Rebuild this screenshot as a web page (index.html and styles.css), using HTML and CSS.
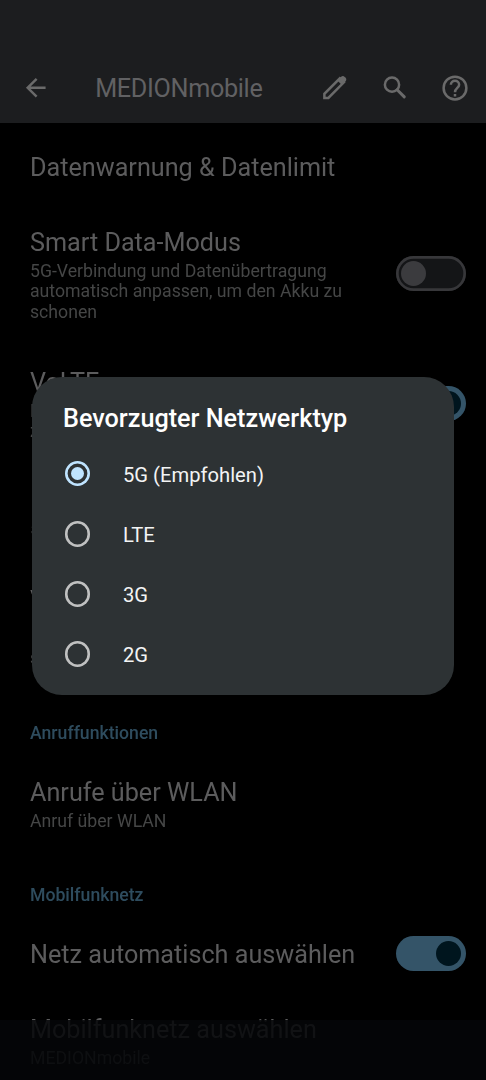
FILE: index.html
```html
<!DOCTYPE html>
<html lang="de">
<head>
<meta charset="utf-8">
<title>MEDIONmobile</title>
<link rel="stylesheet" href="styles.css">
</head>
<body>
<div class="screen">
  <header class="bar">
    <svg class="back" width="29.500" height="29.500" viewBox="0 0 24 24"><path d="M20 11H7.830l5.590-5.590L12 4l-8 8 8 8 1.410-1.410L7.830 13H20v-2z"/></svg>
    <h1 class="bar-title">MEDIONmobile</h1>
    <div class="actions">
      <svg width="30" height="30" viewBox="0 0 24 24"><path class="line" d="M3.500 20v-3.300L15.900 4.300l3.200 3.200L6.700 20z"/><path d="M13.900 5.900l2.800-2.800a2.200 2.200 0 0 1 3.100 0l.5.5a2.200 2.200 0 0 1 0 3.100l-2.800 2.800z"/></svg>
      <svg width="30" height="30" viewBox="0 0 24 24"><circle class="line" cx="9.600" cy="9.300" r="5.700"/><path class="line handle" d="M13.700 13.400l5.700 5.700"/></svg>
      <svg width="30" height="30" viewBox="0 0 24 24"><path d="M11 16.800h2v2h-2zM12 1.900a10.100 10.100 0 1 0 0 20.200 10.100 10.100 0 0 0 0-20.200zm0 18.200a8.100 8.100 0 1 1 0-16.200 8.100 8.100 0 0 1 0 16.200z"/><path class="line" d="M8.700 9.300c0-1.800 1.500-3.100 3.300-3.100s3.300 1.300 3.300 3.100c0 2.500-3.300 2.700-3.300 6"/></svg>
    </div>
  </header>
  <main class="list">
    <section class="row limit"><h2>Datenwarnung &amp; Datenlimit</h2></section>
    <section class="row smart">
      <div class="copy"><h2>Smart Data-Modus</h2><p>5G-Verbindung und Datenübertragung<br>automatisch anpassen, um den Akku zu<br>schonen</p></div>
      <div class="switch off"><i></i></div>
    </section>
    <section class="row volte">
      <div class="copy"><h2>VoLTE</h2><p>HD-Sprachanrufe<br>zulassen</p></div>
      <div class="switch on"><i></i></div>
    </section>
    <section class="row network"><div class="copy"><h2>Bevorzugter Netzwerktyp</h2><p>5G (Empfohlen)</p></div></section>
    <section class="row operator"><div class="copy"><h2>Verfügbare<br>Netze</h2><p>suchen</p></div></section>
    <h3 class="category calls">Anruffunktionen</h3>
    <section class="row wifi"><div class="copy"><h2>Anrufe über WLAN</h2><p>Anruf über WLAN</p></div></section>
    <h3 class="category mobile">Mobilfunknetz</h3>
    <section class="row auto"><h2>Netz automatisch auswählen</h2><div class="switch on"><i></i></div></section>
    <section class="row choose"><div class="copy"><h2>Mobilfunknetz auswählen</h2><p>MEDIONmobile</p></div></section>
  </main>
  <div class="nav"></div>
  <div class="dialog">
    <h2 class="dialog-title">Bevorzugter Netzwerktyp</h2>
    <div class="option"><span class="radio checked"></span><span class="label">5G (Empfohlen)</span></div>
    <div class="option"><span class="radio"></span><span class="label">LTE</span></div>
    <div class="option"><span class="radio"></span><span class="label">3G</span></div>
    <div class="option"><span class="radio"></span><span class="label">2G</span></div>
  </div>
</div>
</body>
</html>
```
FILE: styles.css
```css
* { box-sizing: border-box; }
body { margin: 0; background: #000; font-family: Roboto, sans-serif; }
h1, h2, h3, p { margin: 0; font-weight: 400; white-space: nowrap; }
.screen { position: relative; height: 1080px; overflow: hidden; }
.bar { height: 123px; padding: 53px 15.6px 0 20.7px; display: flex; align-items: center; background: #1c1d1f; }
.bar svg { fill: #6a6a6a; display: block; }
.bar .line { fill: none; stroke: #6a6a6a; stroke-width: 2; }
.bar .handle { stroke-width: 2.4; stroke-linecap: round; }
.bar-title { margin-left: 45px; font-size: 25.2px; letter-spacing: -0.33px; color: #616163; flex: 1; }
.actions { display: flex; gap: 30px; }
.actions svg { flex: none; }
.list { display: flex; flex-direction: column; will-change: transform; }
.row { padding: 0 20.3px 0 30px; display: flex; align-items: center; justify-content: space-between; flex: none; }
.row h2 { font-size: 25.2px; line-height: 30px; padding-top: 1px; color: #5c5c5d; }
.row p { font-size: 17.68px; line-height: 20.6px; color: #454646; margin-top: 2.5px; }
.copy { margin-top: 3px; }
.limit { height: 89px; }
.smart { height: 123px; }
.volte { height: 136px; }
.network { height: 81px; }
.operator { height: 147px; }
.wifi { height: 118px; }
.auto { height: 95px; }
.auto h2 { padding-top: 2px; }
.choose { height: 78px; }
.category { font-size: 17.65px; font-weight: 500; line-height: 22px; padding-left: 30px; color: #2e4c5e; flex: none; }
.calls { margin-top: 23px; }
.mobile { margin-top: 22px; }
.switch { width: 70px; height: 35px; border-radius: 18px; padding: 5px; display: flex; flex: none; }
.switch i { width: 25px; height: 25px; border-radius: 50%; }
.off { background: #141517; box-shadow: inset 0 0 0 2.7px #37373a; }
.off i { background: #3b3b3e; }
.on { background: #345468; justify-content: flex-end; }
.on i { background: #00151e; }
.nav { position: absolute; left: 0; right: 0; bottom: 0; height: 60px; background: rgba(5,6,8,.86); }
.dialog { position: absolute; left: 32px; top: 377px; width: 421.500px; height: 317.7px; border-radius: 30px; background: #2d3234; padding: 25px 31px 0 32.7px; }
.dialog-title { font-size: 25.2px; line-height: 34px; font-weight: 500; color: #fff; margin-bottom: 7.5px; margin-left: -1.7px; }
.option { height: 60.2px; display: flex; align-items: center; gap: 32.7px; font-size: 20.2px; color: #f3f4f4; }
.label { padding-top: 2.2px; }
.radio { width: 25.6px; height: 25.6px; border-radius: 50%; box-shadow: inset 0 0 0 2.6px #c0c1c1; display: flex; align-items: center; justify-content: center; flex: none; }
.checked { box-shadow: inset 0 0 0 2.6px #bfe4ff; }
.checked::after { content: ""; width: 13px; height: 13px; border-radius: 50%; background: #bfe4ff; flex: none; }
```
